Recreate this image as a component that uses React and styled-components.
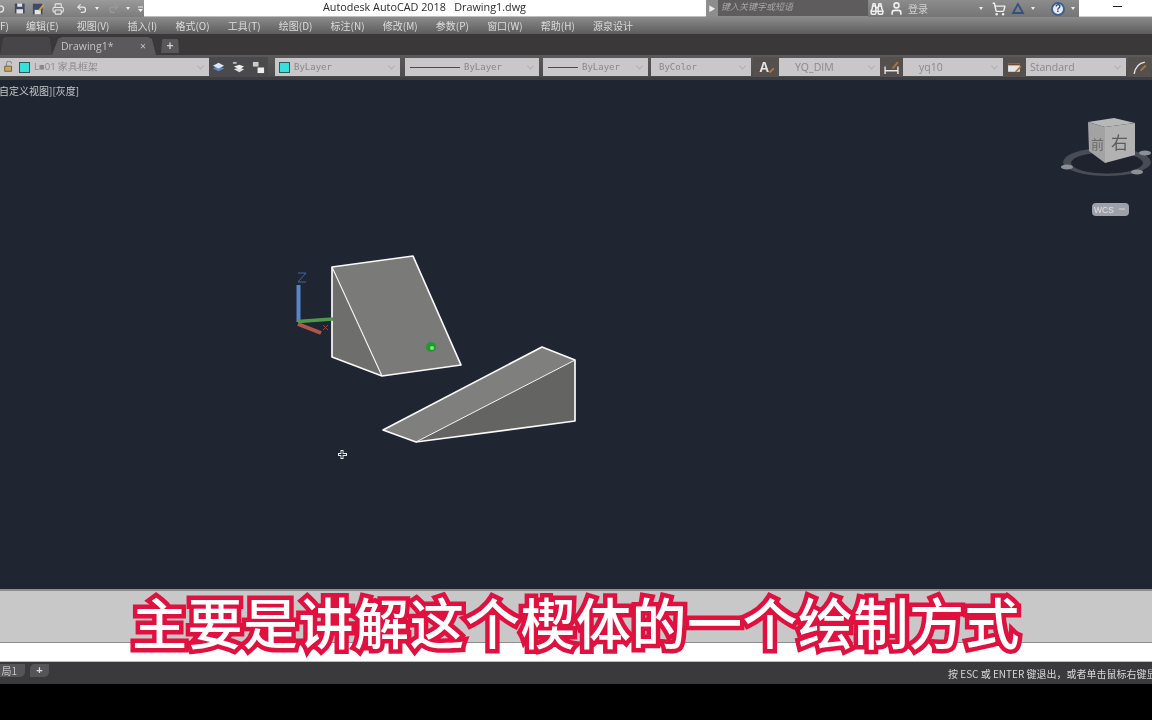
import React from "react";
import styled, { createGlobalStyle } from "styled-components";
import { Binoculars, ShoppingCart, User, Printer, Undo2, Redo2 } from "lucide-react";

const menus = ["编辑(E)", "视图(V)", "插入(I)", "格式(O)", "工具(T)", "绘图(D)", "标注(N)", "修改(M)", "参数(P)", "窗口(W)", "帮助(H)", "源泉设计"];

const GlobalStyle = createGlobalStyle`
  html, body {
    margin: 0;
    background: #000;
    overflow: hidden;
  }
  * {
    box-sizing: border-box;
  }
`;

const Page = styled.div`
  width: 1152px;
  height: 720px;
  display: flex;
  flex-direction: column;
  position: relative;
  overflow: hidden;
  background: #000;
  font-family: "Noto Sans CJK SC", "Liberation Sans", sans-serif;
  filter: blur(0.35px);
`;

const TitleBar = styled.div`
  height: 17px;
  display: flex;
  flex: none;
`;

const QuickAccess = styled.div`
  width: 144px;
  display: flex;
  align-items: center;
  gap: 7px;
  overflow: hidden;
  background: linear-gradient(#9a9a9a, #7c7c7c);
  color: #e8e8e8;
`;

const TitleArea = styled.div`
  width: 562px;
  background: #fff;
  border-bottom: 1px solid #bdbdbd;
  color: #2a2a2a;
  font: 10.8px/14px "Open Sans", sans-serif;
  padding-left: 179px;
  white-space: pre;
`;

const SearchBox = styled.div`
  width: 162px;
  display: flex;
  background: #5e5c5c;
  border-bottom: 1px solid #8a8a8a;
  color: #a8a8a8;
  font-size: 9px;
  line-height: 14px;
  font-style: italic;
`;

const SearchArrow = styled.div`
  width: 12px;
  background: #8d8d8d;
  color: #eee;
  display: grid;
  place-items: center;
  margin-right: 3px;
  font-size: 7px;
  font-style: normal;
`;

const InfoBar = styled.div`
  width: 211px;
  display: flex;
  align-items: center;
  background: linear-gradient(#8c8c8c, #757575);
  color: #e4e4e4;
  padding-left: 2px;
`;

const LoginText = styled.span`
  font-size: 10px;
  margin-left: 4px;
  color: #cfcfcf;
  width: 71px;
`;

const Drop = styled.span`
  width: 0;
  height: 0;
  border-left: 2.5px solid transparent;
  border-right: 2.5px solid transparent;
  border-top: 3px solid #eee;
  margin-left: ${(p) => p.$left || 0}px;
  margin-right: ${(p) => p.$right || 0}px;
`;

const HelpDot = styled.span`
  width: 14px;
  height: 14px;
  border-radius: 50%;
  background: #e8edf5;
  border: 2px solid #3f5f92;
  color: #2c4a80;
  font: bold 10px/10px "Liberation Sans", sans-serif;
  text-align: center;
  margin-left: 16px;
  margin-right: 6px;
`;

const WindowButtons = styled.div`
  flex: 1;
  background: #fff;
  border-bottom: 1px solid #cfcfcf;
  display: flex;
  justify-content: center;
  padding: 6px 0 0 4px;
`;

const Minimize = styled.span`
  width: 9px;
  height: 1px;
  background: #222;
`;

const MenuBar = styled.div`
  height: 17px;
  flex: none;
  display: flex;
  align-items: center;
  gap: 18.2px;
  padding-left: 26px;
  position: relative;
  background: linear-gradient(#8b8b8b, #5c5c5c);
  color: #dcdcdc;
  font-size: 10px;
  white-space: nowrap;
`;

const ClippedMenu = styled.span`
  position: absolute;
  left: 0;
`;

const TabBar = styled.div`
  height: 21px;
  flex: none;
  display: flex;
  align-items: flex-end;
  background: #3a3839;
`;

const Tab = styled.div`
  height: 18px;
  display: flex;
  align-items: center;
  background: ${(p) => p.$bg};
  color: #c4c4c4;
  width: ${(p) => p.$w}px;
  margin-left: ${(p) => p.$ml || 0}px;
  clip-path: polygon(0 100%, 6% 8%, 10% 0, 92% 0, 96% 10%, 100% 100%);
  font: 10.5px "Open Sans", sans-serif;
`;

const FileTab = styled(Tab)`
  padding-left: 9px;
  justify-content: space-between;
  padding-right: 10px;
`;

const PlusTab = styled(Tab)`
  height: 14px;
  margin-bottom: 2px;
  justify-content: center;
  font: bold 12px/12px "Liberation Sans", sans-serif;
  color: #cfcfcf;
`;

const Toolbar = styled.div`
  height: 25px;
  flex: none;
  display: flex;
  align-items: center;
  padding-top: 2px;
  background: linear-gradient(#5a5a5a, #4b4b4b);
  border-bottom: 3px solid #3c3e44;
`;

const Combo = styled.div`
  width: ${(p) => p.$w}px;
  margin-left: ${(p) => p.$ml || 0}px;
  height: 18px;
  display: flex;
  align-items: center;
  gap: 4px;
  padding: 0 6px 0 ${(p) => p.$pl ?? 5}px;
  background: #c9c7c9;
  color: #8a888a;
  font: ${(p) => (p.$serif ? '9px "DejaVu Sans Mono", monospace' : '10.5px "Open Sans", sans-serif')};
  white-space: nowrap;
  overflow: hidden;
`;

const ComboText = styled.span`
  flex: 1;
  padding-left: ${(p) => p.$pl || 0}px;
`;

const LayerName = styled(ComboText)`
  font-size: 9.5px;
`;

const Swatch = styled.span`
  width: 11px;
  height: 11px;
  flex: none;
  background: #38e0dc;
  border: 1px solid #2b5a5c;
`;

const Line = styled.span`
  width: ${(p) => p.$w}px;
  height: 1px;
  background: #4a4a4a;
  flex: none;
`;

const Chevron = styled.span`
  width: 5px;
  height: 5px;
  flex: none;
  border-right: 1px solid #aeacae;
  border-bottom: 1px solid #aeacae;
  transform: rotate(45deg) translate(-1px, -1px);
`;

const ToolIcon = styled.div`
  width: ${(p) => p.$w || 23}px;
  height: 20px;
  flex: none;
  display: grid;
  place-items: center;
  margin-left: ${(p) => p.$ml || 0}px;
  background: #55504e;
  color: #dedede;
`;

const LayerTools = styled.div`
  width: 59px;
  height: 20px;
  flex: none;
  display: flex;
  align-items: center;
  justify-content: space-around;
  background: #4a4a4c;
`;

const Viewport = styled.div`
  height: 509px;
  flex: none;
  position: relative;
  background: #1f2531;
  overflow: hidden;
`;

const ViewLabel = styled.div`
  position: absolute;
  left: -1px;
  top: 4px;
  color: #c9c9c9;
  font-size: 10px;
  line-height: 14px;
`;

const Scene = styled.svg`
  position: absolute;
  left: 0;
  top: 0;
`;

const CommandHistory = styled.div`
  height: 54px;
  flex: none;
  background: #c8c8c8;
  border-top: 2px solid #8f8f8f;
  border-bottom: 1px solid #8e8e8e;
`;

const CommandInput = styled.div`
  height: 19px;
  flex: none;
  background: #fff;
  border-bottom: 1px solid #bbb;
`;

const StatusBar = styled.div`
  height: 22px;
  flex: none;
  display: flex;
  align-items: center;
  background: #3a3a3c;
  color: #d8d8d8;
  font-size: 10px;
`;

const LayoutTab = styled.div`
  width: 25px;
  height: 13px;
  margin-top: -5px;
  background: #555557;
  color: #c4c4c4;
  line-height: 13px;
  text-align: right;
  padding-right: 8px;
  border-radius: 0 0 5px 0;
  white-space: nowrap;
`;

const LayoutPlus = styled.div`
  width: 19px;
  height: 13px;
  margin: -5px 0 0 5px;
  background: #555557;
  color: #ddd;
  border-radius: 5px 0 5px 0;
  text-align: center;
  font: bold 11px/12px "Liberation Sans", sans-serif;
`;

const Prompt = styled.div`
  margin-left: auto;
  width: 204px;
  overflow: hidden;
  white-space: nowrap;
`;

const BottomBlack = styled.div`
  flex: 1;
  background: #000;
`;

const Subtitle = styled.div`
  position: absolute;
  left: 132px;
  top: 581px;
  width: 900px;
  color: #fff;
  font-size: 55px;
  line-height: 78px;
  font-weight: 500;
  letter-spacing: 0.5px;
  white-space: nowrap;
  -webkit-text-stroke: 9px #e0103f;
  paint-order: stroke fill;
`;

function Cad({ children, size = 14 }) {
  return (
    <svg width={size} height={size} viewBox="0 0 14 14">
      {children}
    </svg>
  );
}

function ViewCube() {
  return (
    <g>
      <ellipse cx="1107" cy="162" rx="44" ry="14" fill="#474c55" />
      <ellipse cx="1107" cy="163" rx="36" ry="10.500" fill="#1e232d" />
      <g fill="#8d9096">
        <ellipse cx="1067" cy="167" rx="6" ry="2.500" />
        <ellipse cx="1145" cy="153" rx="6" ry="2.500" />
        <ellipse cx="1137" cy="172" rx="6" ry="2.500" />
      </g>
      <polygon points="1088,122 1114,118 1135,123 1105,127" fill="#b8b8b8" />
      <polygon points="1088,122 1105,127 1105,163 1089,151" fill="#a3a3a3" />
      <polygon points="1105,127 1135,123 1135,155 1105,163" fill="#b2b2b2" />
      <text x="1091" y="149" fontSize="13" fill="#6a6a6a" fontFamily="Noto Sans CJK SC, serif">前</text>
      <text x="1111" y="149" fontSize="17" fill="#5c5c5c" fontFamily="Noto Sans CJK SC, serif">右</text>
      <rect x="1092" y="203" width="37" height="13" rx="4" fill="#9ea1aa" />
      <text x="1094" y="213" fontSize="8.500" fill="#e0e0e4" fontFamily="Liberation Sans, sans-serif">WCS</text>
      <path d="M1119 209h6" stroke="#d5d5da" strokeWidth="1" />
    </g>
  );
}

function Solids() {
  return (
    <g>
      <polygon points="332,267 413,256 461,365 382,376" fill="#7a7a79" />
      <polygon points="332,267 382,376 332,357" fill="#6e6e6d" />
      <g fill="none" stroke="#fafafa" strokeWidth="1.700" strokeLinejoin="round">
        <polygon points="332,267 413,256 461,365 382,376 332,357" />
        <path d="M332 267 382 376" strokeWidth="1.100" />
      </g>
      <polygon points="383,430 542,347 575,360 416,442" fill="#7f7f7e" />
      <polygon points="416,442 575,360 575,421" fill="#646463" />
      <g fill="none" stroke="#fafafa" strokeWidth="1.700" strokeLinejoin="round">
        <polygon points="383,430 542,347 575,360 575,421 416,442" />
        <path d="M416 442 575 360" strokeWidth="1" />
      </g>
    </g>
  );
}

function Ucs() {
  return (
    <g>
      <path d="M298.500 322V285" stroke="#5b85c8" strokeWidth="4" />
      <path d="M298 321.500 333 319" stroke="#4f9a4a" strokeWidth="3.500" />
      <path d="M298 324 321 333" stroke="#b0574c" strokeWidth="4" />
      <path d="M298 273h8l-8 9h8" fill="none" stroke="#3f66a8" strokeWidth="1" />
      <path d="M323 325l5 5m0-5l-5 5" stroke="#8a4c47" strokeWidth="1" />
      <circle cx="431" cy="347" r="5" fill="#1f9a2e" />
      <circle cx="432" cy="348" r="2" fill="#7fe58a" />
      <path d="M342 450v9M338 454.500h9" stroke="#e8e8e8" strokeWidth="3" />
      <path d="M342 451v7M339 454.500h7" stroke="#1f2531" strokeWidth="1.200" />
    </g>
  );
}

export default function App() {
  return (
    <Page>
      <GlobalStyle />
      <TitleBar>
        <QuickAccess>
          <Cad size={8}>
            <circle cx="1" cy="7" r="6" fill="none" stroke="#e8e8e8" strokeWidth="2.500" />
          </Cad>
          <Cad size={13}>
            <path d="M1 1h12v12H1z" fill="#3d4c64" />
            <path d="M4 1h6v4H4zM3 8h8v5H3z" fill="#e4e4e4" />
          </Cad>
          <Cad>
            <path d="M1 1h11v12H1z" fill="#3d4c64" />
            <path d="M3 8h7v5H3z" fill="#e4e4e4" />
            <path d="M7 8 13 1l1 2-5 6z" fill="#e09a3c" />
          </Cad>
          <Printer size={14} />
          <Undo2 size={13} strokeWidth={2.5} style={{ marginLeft: 5 }} />
          <Drop />
          <Redo2 size={13} color="#9a9a9a" strokeWidth={2.5} style={{ marginLeft: 2 }} />
          <Drop />
          <Cad size={8}>
            <path d="M2 2h10v2H2zM2 7h10L7 13z" fill="#eee" />
          </Cad>
        </QuickAccess>
        <TitleArea>{"Autodesk AutoCAD 2018   Drawing1.dwg"}</TitleArea>
        <SearchBox>
          <SearchArrow>▶</SearchArrow>
          键入关键字或短语
        </SearchBox>
        <InfoBar>
          <Binoculars size={14} strokeWidth={2.5} color="#f0f0f0" />
          <User size={15} strokeWidth={2.5} color="#f0f0f0" style={{ marginLeft: 5 }} />
          <LoginText>登录</LoginText>
          <Drop $right={9} />
          <ShoppingCart size={14} strokeWidth={2.5} color="#f0f0f0" />
          <span style={{ width: 5 }} />
          <Cad>
            <path d="M7 2 2 11h10z" fill="none" stroke="#34507f" strokeWidth="1.800" />
          </Cad>
          <Drop $left={6} />
          <HelpDot>?</HelpDot>
          <Drop />
        </InfoBar>
        <WindowButtons>
          <Minimize />
        </WindowButtons>
      </TitleBar>

      <MenuBar>
        <ClippedMenu>F)</ClippedMenu>
        {menus.map((m) => (
          <span key={m}>{m}</span>
        ))}
      </MenuBar>

      <TabBar>
        <Tab $w={52} $bg="#474547" />
        <FileTab $w={104} $bg="#5b595b">
          Drawing1*
          <span>×</span>
        </FileTab>
        <PlusTab $w={18} $ml={5} $bg="#59575a">+</PlusTab>
      </TabBar>

      <Toolbar>
        <Combo $w={209} $pl={3}>
          <Cad size={12}>
            <path d="M2 6h8v6H2z" fill="#c9a45a" stroke="#6b5a30" />
            <path d="M4 6V3a3 3 0 0 1 6 0" fill="none" stroke="#777" />
          </Cad>
          <Swatch />
          <LayerName>L■01 家具框架</LayerName>
          <Chevron />
        </Combo>
        <LayerTools>
          <Cad size={13}>
            <path d="M1 8 7 5l6 3-6 3z" fill="#5d8bc6" />
            <path d="M1 5 7 2l6 3-6 3z" fill="#dfe6ef" />
          </Cad>
          <Cad size={13}>
            <path d="M2 9 8 7l5 2-5 3z" fill="#ddd" />
            <path d="M2 6 8 4l5 2-5 3z" fill="#eee" />
            <path d="M1 1h4v2H1z" fill="#bbb" />
          </Cad>
          <Cad size={13}>
            <path d="M1 1h6v5H1z" fill="#ccc" />
            <path d="M6 7h7v6H6z" fill="#eee" />
          </Cad>
        </LayerTools>
        <Combo $w={125} $ml={7} $pl={4} $serif>
          <Swatch />
          <ComboText>ByLayer</ComboText>
          <Chevron />
        </Combo>
        <Combo $w={134} $ml={5} $serif>
          <Line $w={50} />
          <ComboText>ByLayer</ComboText>
          <Chevron />
        </Combo>
        <Combo $w={105} $ml={4} $serif>
          <Line $w={30} />
          <ComboText>ByLayer</ComboText>
          <Chevron />
        </Combo>
        <Combo $w={100} $ml={3} $pl={8} $serif>
          <ComboText>ByColor</ComboText>
          <Chevron />
        </Combo>
        <ToolIcon $w={26} $ml={2}>
          <Cad size={16}>
            <text x="1" y="11" fontSize="12" fontWeight="700" fill="#e6e6e6" fontFamily="Liberation Sans, sans-serif">A</text>
            <path d="M10 12l4-4" stroke="#b5763d" strokeWidth="1.500" />
          </Cad>
        </ToolIcon>
        <Combo $w={101} $pl={16}>
          <ComboText>YQ_DIM</ComboText>
          <Chevron />
        </Combo>
        <ToolIcon>
          <Cad size={15}>
            <path d="M1 6v7M13 6v7M1 10h12" stroke="#e6e6e6" strokeWidth="1.300" />
            <path d="M8 8l5-6" stroke="#b5763d" strokeWidth="1.600" />
          </Cad>
        </ToolIcon>
        <Combo $w={100} $pl={16}>
          <ComboText>yq10</ComboText>
          <Chevron />
        </Combo>
        <ToolIcon>
          <Cad size={15}>
            <path d="M1 3h11v8H1z" fill="#e6e6e6" />
            <path d="M1 3h11v2H1z" fill="#6d4a36" />
            <path d="M8 11l5-5" stroke="#b5763d" strokeWidth="1.600" />
          </Cad>
        </ToolIcon>
        <Combo $w={100} $pl={4}>
          <ComboText>Standard</ComboText>
          <Chevron />
        </Combo>
        <ToolIcon $ml={2}>
          <Cad size={15}>
            <path d="M2 13C3 7 6 3 12 2" fill="none" stroke="#e6e6e6" strokeWidth="1.300" />
            <path d="M8 10l5-5" stroke="#b5763d" strokeWidth="1.600" />
          </Cad>
        </ToolIcon>
      </Toolbar>

      <Viewport>
        <ViewLabel>自定义视图][灰度]</ViewLabel>
        <Scene width="1152" height="509" viewBox="0 80 1152 509">
          <Solids />
          <Ucs />
          <ViewCube />
        </Scene>
      </Viewport>

      <CommandHistory />
      <CommandInput />
      <StatusBar>
        <LayoutTab>局1</LayoutTab>
        <LayoutPlus>+</LayoutPlus>
        <Prompt>按 ESC 或 ENTER 键退出，或者单击鼠标右键显示快捷菜单。</Prompt>
      </StatusBar>
      <BottomBlack />
      <Subtitle>主要是讲解这个楔体的一个绘制方式</Subtitle>
    </Page>
  );
}
